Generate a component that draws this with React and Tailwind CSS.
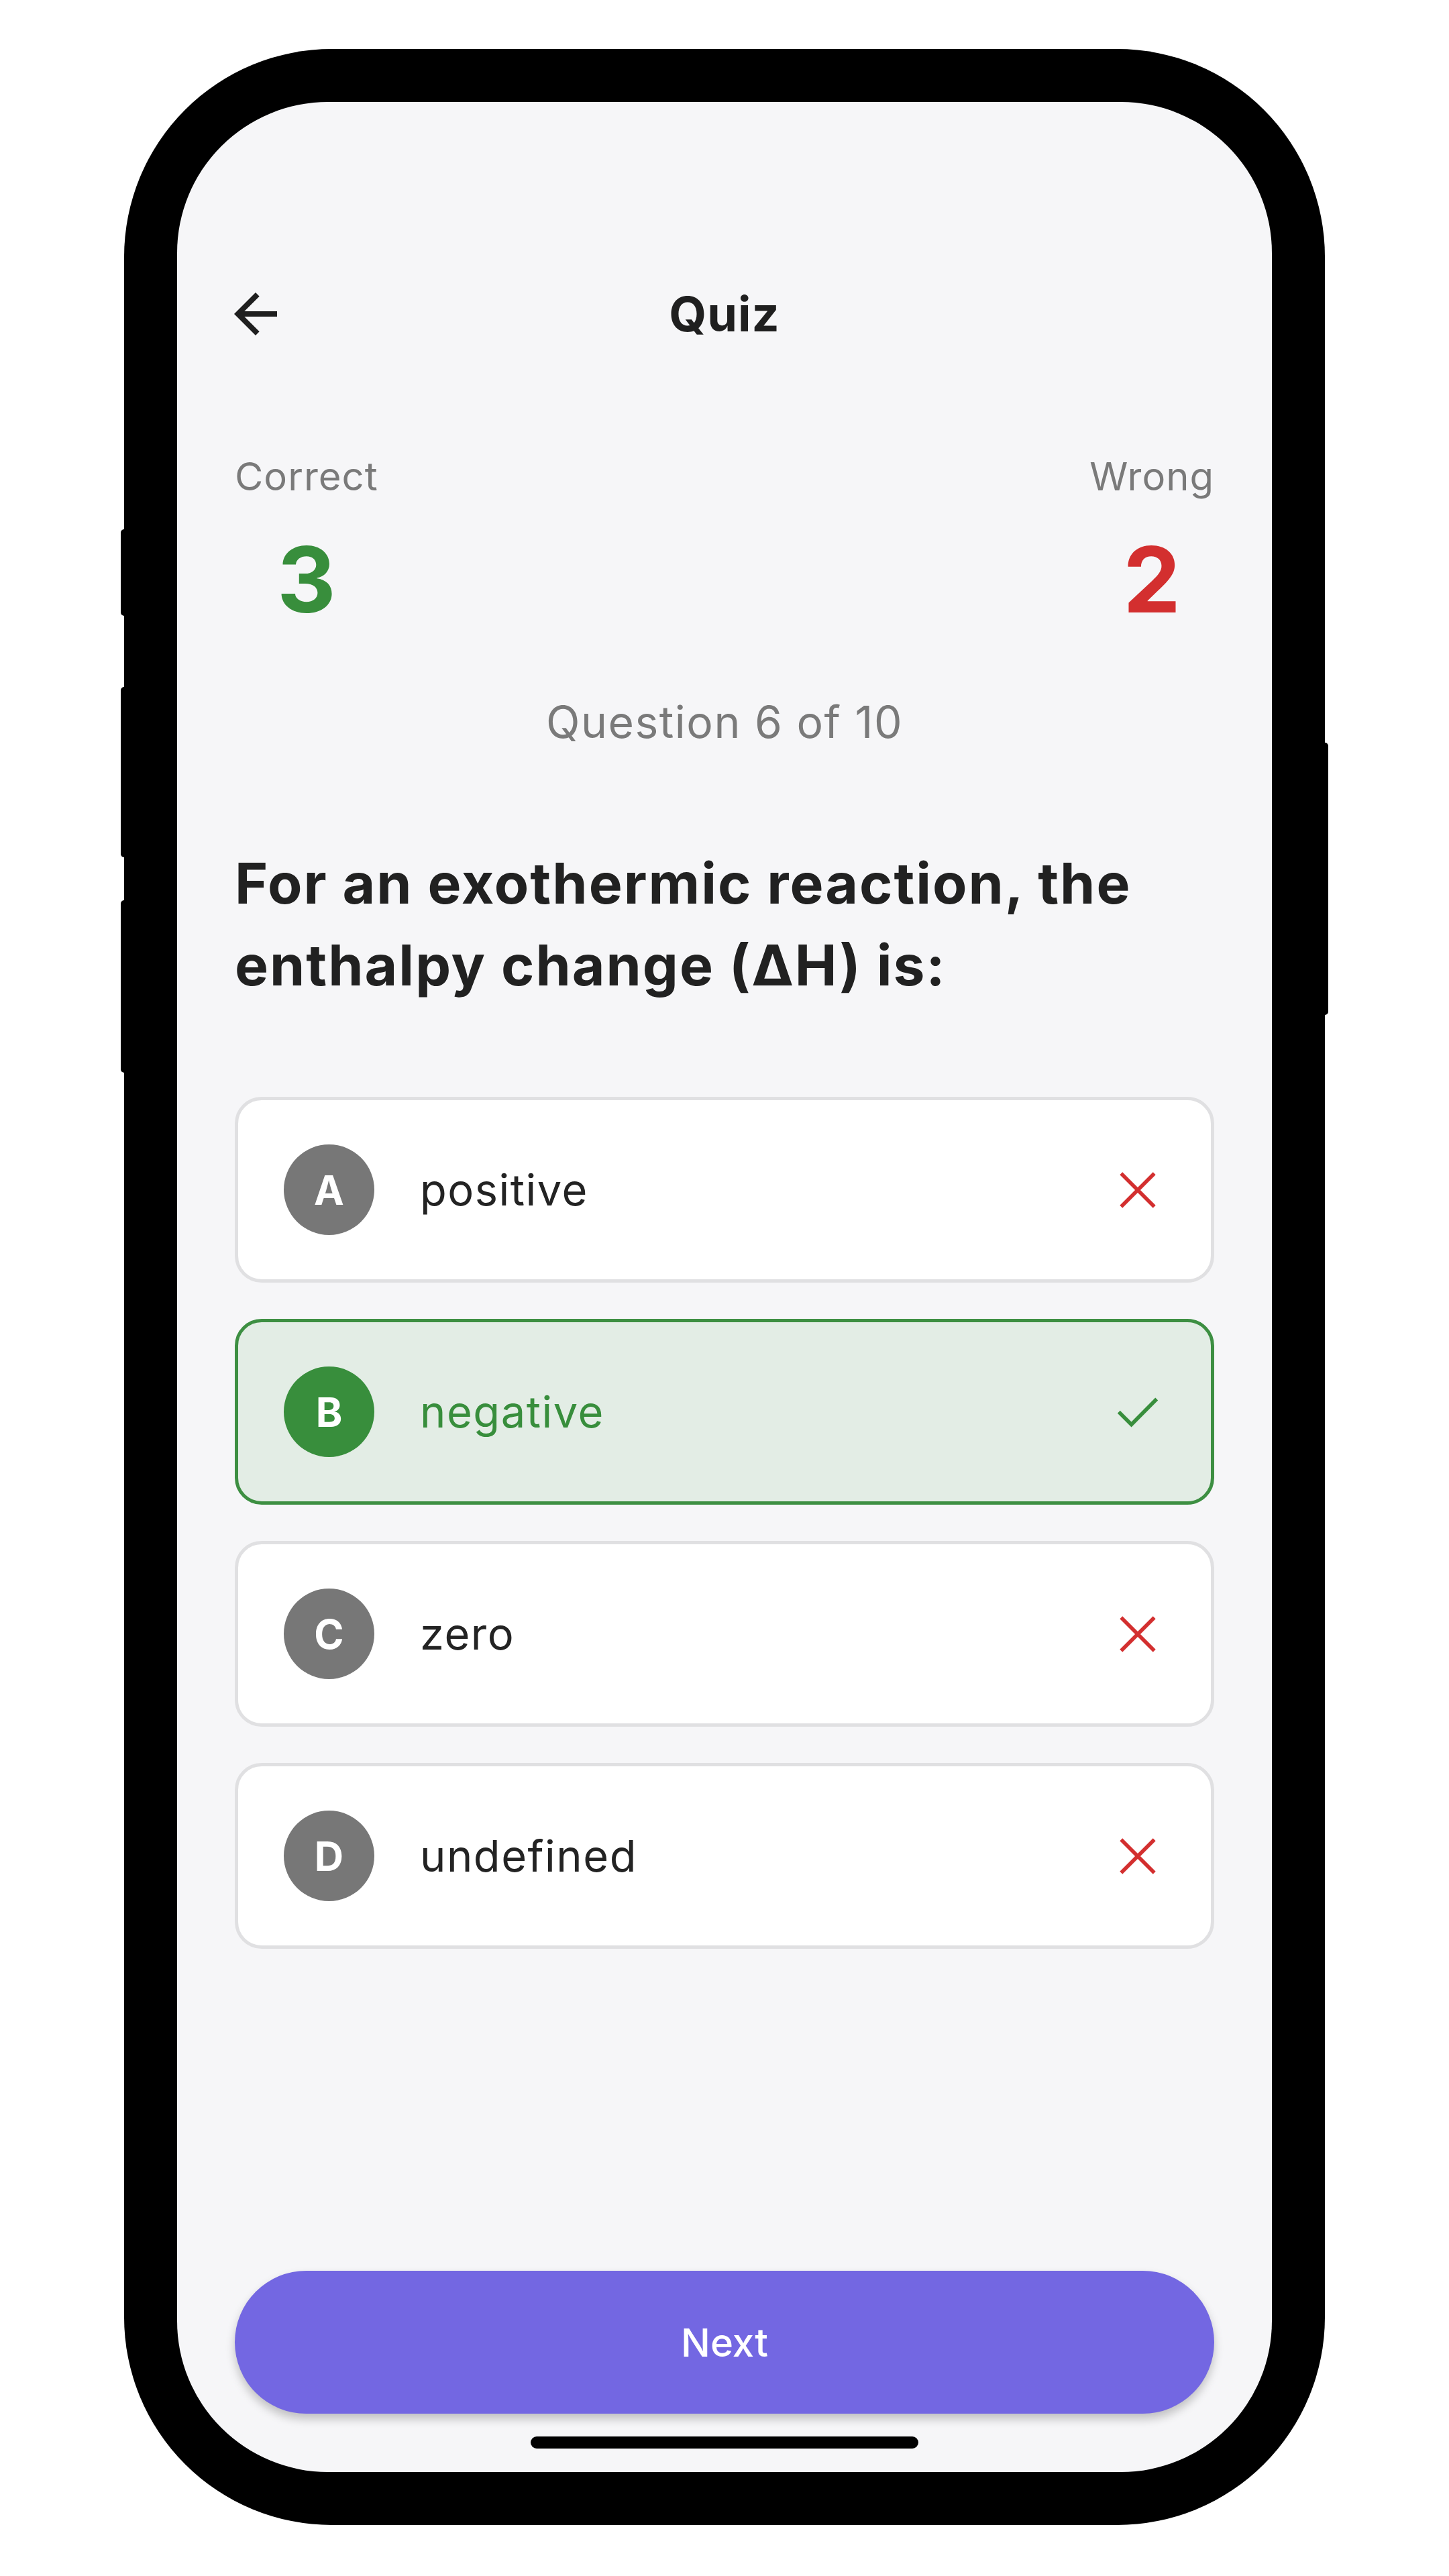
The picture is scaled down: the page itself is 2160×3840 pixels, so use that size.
import React from 'react';

const options = [
    { letter: 'A', text: 'positive', correct: false },
    { letter: 'B', text: 'negative', correct: true },
    { letter: 'C', text: 'zero', correct: false },
    { letter: 'D', text: 'undefined', correct: false },
];

const CrossIcon = () => (
    <svg viewBox="0 0 24 24" className="w-[84px] h-[84px]" fill="none" stroke="#D32F2F" strokeWidth="1.6" strokeLinecap="square">
        <path d="M5.5 5.5l13 13M18.5 5.5l-13 13" />
    </svg>
);

const CheckIcon = () => (
    <svg viewBox="0 0 24 24" className="w-[84px] h-[84px]" fill="none" stroke="#388E3C" strokeWidth="1.6" strokeLinecap="square">
        <path d="M4.5 12.5l4.8 4.8L19.5 7" />
    </svg>
);

const OptionCard = ({ option }) => {
    const { letter, text, correct } = option;
    return (
        <div
            className={
                correct
                    ? 'h-[277px] rounded-[40px] border-[5px] border-[#3D8F42] bg-[#E3EDE5] flex items-center pl-[68px] pr-[67px]'
                    : 'h-[277px] rounded-[40px] border-[5px] border-[#E0E0E2] bg-white flex items-center pl-[68px] pr-[67px]'
            }
        >
            <div
                className={
                    correct
                        ? 'w-[135px] h-[135px] rounded-full bg-[#388E3C] flex items-center justify-center text-white text-[60px] font-bold leading-none'
                        : 'w-[135px] h-[135px] rounded-full bg-[#777777] flex items-center justify-center text-white text-[60px] font-bold leading-none'
                }
            >
                {letter}
            </div>
            <div
                className={
                    correct
                        ? 'flex-1 ml-[68px] text-[65px] leading-none tracking-[1.5px] text-[#388E3C]'
                        : 'flex-1 ml-[68px] text-[65px] leading-none tracking-[1.5px] text-[#232323]'
                }
            >
                {text}
            </div>
            {correct ? <CheckIcon /> : <CrossIcon />}
        </div>
    );
};

const App = () => {
    return (
        <div className="w-[2160px] h-[3840px] bg-white flex justify-center pt-[73px] font-[Inter,'Noto_Sans',sans-serif]">
            <div className="relative w-[1790px] h-[3691px] bg-black rounded-[310px] p-[79px]">
                {/* side buttons */}
                <div className="absolute left-[-5px] top-[716px] w-[12px] h-[129px] bg-black rounded-[5px]" />
                <div className="absolute left-[-5px] top-[951px] w-[12px] h-[254px] bg-black rounded-[5px]" />
                <div className="absolute left-[-5px] top-[1269px] w-[12px] h-[257px] bg-black rounded-[5px]" />
                <div className="absolute right-[-5px] top-[1034px] w-[12px] h-[406px] bg-black rounded-[5px]" />

                <div className="w-full h-full rounded-[225px] bg-[#F6F6F8] overflow-hidden flex flex-col px-[86px]">
                    {/* Header */}
                    <div className="mt-[268px] h-[96px] flex items-center">
                        <svg viewBox="0 0 24 24" className="w-[96px] h-[96px] -ml-[17px]" fill="#1F1F1F">
                            <path d="M20 11H7.83l5.59-5.59L12 4l-8 8 8 8 1.41-1.41L7.83 13H20v-2z" />
                        </svg>
                        <div className="flex-1 text-center text-[72px] font-bold leading-none tracking-[1px] text-[#1F1F1F]">Quiz</div>
                        <div className="w-[79px]" />
                    </div>

                    {/* Score */}
                    <div className="mt-[165px] flex justify-between">
                        <div className="flex flex-col items-center">
                            <div className="text-[58px] leading-none tracking-[1px] text-[#7A7A7A]">Correct</div>
                            <div className="mt-[57px] text-[136px] font-bold leading-none text-[#388E3C]">3</div>
                        </div>
                        <div className="flex flex-col items-center">
                            <div className="text-[58px] leading-none tracking-[1px] text-[#7A7A7A]">Wrong</div>
                            <div className="mt-[57px] text-[136px] font-bold leading-none text-[#D32F2F]">2</div>
                        </div>
                    </div>

                    <div className="mt-[111px] text-center text-[66px] leading-none tracking-[1.5px] text-[#7A7A7A]">
                        Question 6 of 10
                    </div>

                    <div className="mt-[147px] text-[84px] font-bold leading-[122px] tracking-[2px] text-[#212121]">
                        For an exothermic reaction, the enthalpy change (ΔH) is:
                    </div>

                    {/* Options */}
                    <div className="mt-[135px] flex flex-col gap-[54px]">
                        {options.map((o) => (
                            <OptionCard key={o.letter} option={o} />
                        ))}
                    </div>

                    <div className="flex-1" />

                    <button className="h-[213px] w-full rounded-full bg-[#7367E2] text-white text-[58px] font-medium leading-none shadow-[0_8px_14px_rgba(0,0,0,0.22)]">
                        Next
                    </button>

                    <div className="mt-[34px] mb-[35px] self-center w-[578px] h-[18px] rounded-full bg-black" />
                </div>
            </div>
        </div>
    );
};

export default App;
